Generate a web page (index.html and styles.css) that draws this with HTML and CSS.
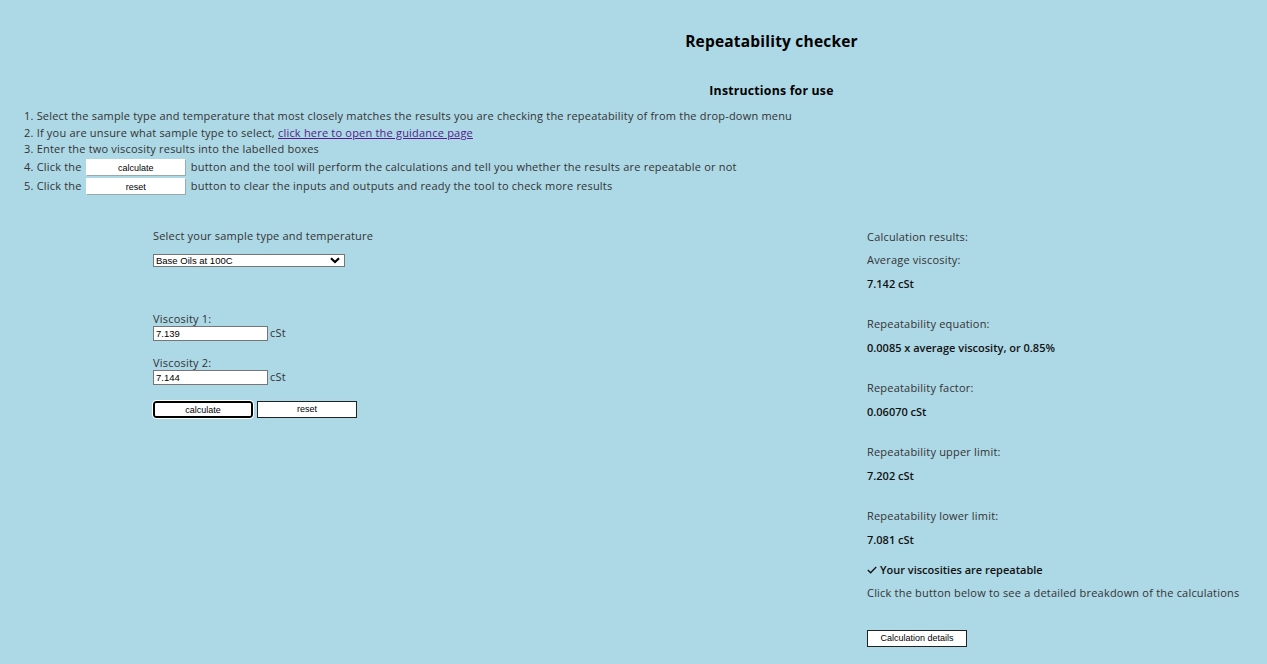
FILE: index.html
```html
<!DOCTYPE html>
<html>
<head>
<meta charset="utf-8">
<title>Repeatability checker</title>
<link rel="stylesheet" href="styles.css">
</head>
<body>
<header class="header">
  <h1 class="title">Repeatability checker</h1>
  <h2 class="subtitle">Instructions for use</h2>
</header>
<section class="instructions">
  <div class="step s1">1. Select the sample type and temperature that most closely matches the results you are checking the repeatability of from the drop-down menu</div>
  <div class="step s2">2. If you are unsure what sample type to select, <a class="link" href="#">click here to open the guidance page</a></div>
  <div class="step s3">3. Enter the two viscosity results into the labelled boxes</div>
  <div class="step s4">4. Click the <span class="demo-btn">calculate</span> button and the tool will perform the calculations and tell you whether the results are repeatable or not</div>
  <div class="step s5">5. Click the <span class="demo-btn">reset</span> button to clear the inputs and outputs and ready the tool to check more results</div>
</section>
<main class="main">
  <div class="left">
    <div class="select-label">Select your sample type and temperature</div>
    <div class="select">
      <span>Base Oils at 100C</span>
      <svg class="chev" width="10" height="7" viewBox="0 0 10 7"><path d="M1 1.2 L5 5 L9 1.2" fill="none" stroke="#000" stroke-width="2.2"/></svg>
    </div>
    <div class="field f1">
      <div class="field-label">Viscosity 1:</div>
      <div class="field-row"><input class="input" type="text" value="7.139"><span class="unit">cSt</span></div>
    </div>
    <div class="field f2">
      <div class="field-label">Viscosity 2:</div>
      <div class="field-row"><input class="input" type="text" value="7.144"><span class="unit">cSt</span></div>
    </div>
    <div class="actions">
      <button class="btn btn-focus">calculate</button>
      <button class="btn">reset</button>
    </div>
  </div>
  <div class="right">
    <div class="res-head">Calculation results:</div>
    <div class="res-label first">Average viscosity:</div>
    <div class="res-value">7.142 cSt</div>
    <div class="res-label">Repeatability equation:</div>
    <div class="res-value">0.0085 x average viscosity, or 0.85%</div>
    <div class="res-label">Repeatability factor:</div>
    <div class="res-value">0.06070 cSt</div>
    <div class="res-label">Repeatability upper limit:</div>
    <div class="res-value">7.202 cSt</div>
    <div class="res-label">Repeatability lower limit:</div>
    <div class="res-value">7.081 cSt</div>
    <div class="verdict"><svg class="tick" width="10" height="8" viewBox="0 0 10 8"><path d="M0.8 4 L3.6 6.8 L9.2 1" fill="none" stroke="#111" stroke-width="1.3"/></svg>Your viscosities are repeatable</div>
    <div class="note">Click the button below to see a detailed breakdown of the calculations</div>
    <button class="btn btn-details">Calculation details</button>
  </div>
</main>
</body>
</html>
```
FILE: styles.css
```css
html, body {
  margin: 0;
  padding: 0;
}
body {
  background: #add8e6;
  color: #333;
  font-family: "Open Sans", "Noto Sans", sans-serif;
  font-size: 11px;
  letter-spacing: 0.2px;
  width: 1267px;
  height: 664px;
  overflow: hidden;
}
.header {
  padding-left: 276px;
  text-align: center;
}
.title {
  margin: 0;
  padding-top: 31px;
  font-size: 15.5px;
  line-height: 20px;
  font-weight: 700;
  color: #000;
}
.subtitle {
  margin: 0;
  padding-top: 32px;
  font-size: 12.3px;
  line-height: 16px;
  font-weight: 700;
  color: #000;
}
.instructions {
  padding-left: 24px;
  padding-top: 9px;
}
.step {
  line-height: 16px;
  white-space: nowrap;
}
.s2 { margin-top: 1px; }
.s4 { margin-top: 1px; height: 18px; line-height: 18px; }
.s5 { margin-top: 1px; height: 18px; line-height: 18px; }
.link {
  color: #551a8b;
}
.demo-btn {
  display: inline-block;
  box-sizing: border-box;
  width: 100px;
  height: 17px;
  line-height: 16px;
  vertical-align: middle;
  margin: -1px 2px 0 1px;
  background: #fff;
  border: 1px solid;
  border-color: #fff #9aa #9aa #fff;
  text-align: center;
  font-family: "Liberation Sans", Arial, sans-serif;
  font-size: 9px;
  letter-spacing: 0;
  color: #000;
}
.main {
  display: grid;
  grid-template-columns: 714px 1fr;
  padding-left: 153px;
  padding-top: 33px;
}
.select-label {
  line-height: 16px;
}
.select {
  box-sizing: border-box;
  margin-top: 10px;
  width: 192px;
  height: 13px;
  background: #fff;
  border: 1px solid #767676;
  display: flex;
  align-items: center;
  justify-content: space-between;
  padding: 0 4px 0 2px;
  font-family: "Liberation Sans", Arial, sans-serif;
  font-size: 9.5px;
  letter-spacing: 0;
  color: #000;
}
.chev { display: block; }
.f1 { margin-top: 45px; }
.f2 { margin-top: 15px; }
.field-label {
  line-height: 14px;
}
.field-row {
  display: flex;
  align-items: flex-start;
}
.input {
  box-sizing: border-box;
  width: 115px;
  height: 15px;
  margin: 0;
  padding: 0 2px;
  border: 1px solid #767676;
  background: #fff;
  font-family: "Liberation Sans", Arial, sans-serif;
  font-size: 9.5px;
  color: #000;
  outline: none;
}
.unit {
  margin-left: 2px;
  line-height: 13px;
}
.actions {
  display: flex;
  gap: 4px;
  margin-top: 16px;
}
.btn {
  box-sizing: border-box;
  width: 100px;
  height: 17px;
  margin: 0;
  padding: 0;
  background: #fff;
  border: 1px solid #222;
  font-family: "Liberation Sans", Arial, sans-serif;
  font-size: 9px;
  letter-spacing: 0;
  color: #000;
  line-height: 15px;
}
.btn-focus {
  border: 2px solid #000;
  border-radius: 3px;
  outline: 1px solid #fff;
}
.right {
  padding-top: 1px;
}
.res-head, .res-label, .res-value, .verdict, .note {
  line-height: 16px;
}
.res-label { margin-top: 24px; }
.res-label.first { margin-top: 7px; }
.res-value {
  margin-top: 8px;
  font-weight: 600;
  letter-spacing: 0;
  color: #111;
}
.verdict {
  margin-top: 14px;
  font-weight: 600;
  letter-spacing: 0;
  color: #111;
  display: flex;
  align-items: center;
  gap: 3px;
}
.tick { display: block; }
.note { margin-top: 7px; }
.btn-details {
  margin-top: 29px;
  width: 100px;
}
```
